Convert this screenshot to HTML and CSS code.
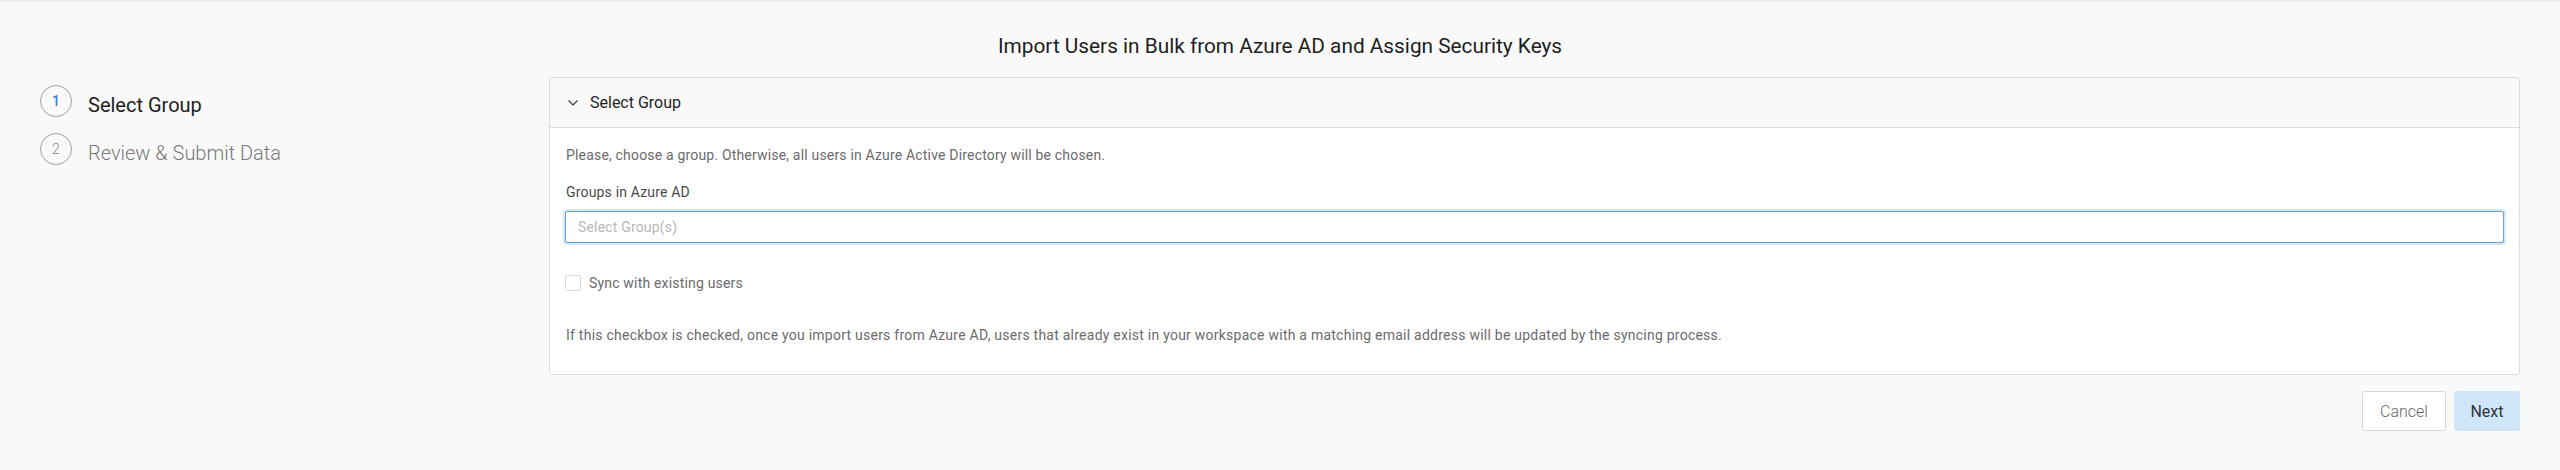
FILE: index.html
```html
<!DOCTYPE html>
<html lang="en">
<head>
<meta charset="utf-8">
<title>Import Users in Bulk from Azure AD</title>
<link rel="stylesheet" href="styles.css">
</head>
<body>
<div class="page">
  <h1 class="title">Import Users in Bulk from Azure AD and Assign Security Keys</h1>
  <div class="content">
    <ol class="steps">
      <li class="step active"><span class="circle">1</span><span class="step-label">Select Group</span></li>
      <li class="step"><span class="circle">2</span><span class="step-label">Review &amp; Submit Data</span></li>
    </ol>
    <div class="main">
      <section class="panel">
        <header class="panel-header">
          <svg class="chevron" width="10" height="6" viewBox="0 0 10 6"><path d="M0.5 0.5 L5 5 L9.5 0.5" fill="none" stroke="#333" stroke-width="1.1"/></svg>
          <span class="panel-title">Select Group</span>
        </header>
        <div class="panel-body">
          <p class="hint">Please, choose a group. Otherwise, all users in Azure Active Directory will be chosen.</p>
          <label class="field-label">Groups in Azure AD</label>
          <div class="select-input"><span class="placeholder">Select Group(s)</span></div>
          <label class="check-row"><span class="checkbox"></span><span class="check-text">Sync with existing users</span></label>
          <p class="hint note">If this checkbox is checked, once you import users from Azure AD, users that already exist in your workspace with a matching email address will be updated by the syncing process.</p>
        </div>
      </section>
      <div class="actions">
        <button class="btn btn-cancel">Cancel</button>
        <button class="btn btn-next">Next</button>
      </div>
    </div>
  </div>
</div>
</body>
</html>
```
FILE: styles.css
```css
html, body {
  margin: 0;
  padding: 0;
  background: #f9f9f9;
}
body {
  font-family: Roboto, "Liberation Sans", sans-serif;
  color: #333;
  height: 470px;
}
.page {
  border-top: 2px solid #ececec;
}
.title {
  margin: 0;
  padding-top: 32px;
  height: 43px;
  line-height: 24px;
  font-size: 20.8px;
  font-weight: 400;
  text-align: center;
  color: #1e1e1e;
}
.content {
  display: flex;
  padding: 0 40px 0 40px;
}
.steps {
  list-style: none;
  margin: 0;
  padding: 0;
  width: 509px;
  flex: none;
}
.step {
  display: flex;
  align-items: center;
  height: 48px;
  gap: 16px;
}
.circle {
  box-sizing: border-box;
  width: 32px;
  height: 32px;
  border: 1px solid #a0a0a0;
  border-radius: 50%;
  display: flex;
  align-items: center;
  justify-content: center;
  font-size: 14px;
  color: #8a8a8a;
  font-weight: 300;
}
.step.active .circle {
  color: #3d7fcc;
  font-weight: 500;
}
.step-label {
  padding-top: 7px;
  font-size: 20px;
  font-weight: 300;
  color: #7a7a7a;
}
.step.active .step-label {
  color: #1e1e1e;
  font-weight: 400;
}
.main {
  flex: 1;
  min-width: 0;
}
.panel {
  border: 1px solid #dcdcdc;
  border-radius: 3px;
  background: #fff;
}
.panel-header {
  display: flex;
  align-items: center;
  height: 49px;
  padding-left: 18px;
  background: #f9f9f9;
  border-bottom: 1px solid #dcdcdc;
  border-radius: 3px 3px 0 0;
}
.chevron {
  margin-top: 1px;
  margin-right: 12px;
}
.panel-title {
  font-size: 16px;
  color: #1e1e1e;
}
.panel-body {
  padding: 17px 15px 29px 16px;
}
.hint {
  margin: 0;
  font-size: 14px;
  letter-spacing: 0.18px;
  line-height: 20px;
  color: #6b6b6b;
  font-weight: 400;
}
.field-label {
  display: block;
  margin-top: 17px;
  font-size: 14px;
  letter-spacing: 0.18px;
  line-height: 20px;
  color: #4a4a4a;
}
.select-input {
  box-sizing: border-box;
  margin-top: 9px;
  margin-left: -1px;
  height: 32px;
  border: 1px solid #64a2dc;
  border-radius: 2px;
  box-shadow: 0 0 0 2px #d8e8f6;
  background: #fff;
  display: flex;
  align-items: center;
  padding-left: 12px;
}
.placeholder {
  font-size: 14px;
  letter-spacing: 0.18px;
  color: #b8b8b8;
}
.check-row {
  display: flex;
  align-items: center;
  gap: 8px;
  margin-top: 30px;
  height: 20px;
}
.checkbox {
  box-sizing: border-box;
  width: 16px;
  height: 16px;
  margin-left: -1px;
  border: 1px solid #dadada;
  border-radius: 2px;
  background: #fff;
}
.check-text {
  font-size: 14px;
  letter-spacing: 0.18px;
  color: #6b6b6b;
}
.note {
  margin-top: 32px;
  letter-spacing: 0.24px;
}
.actions {
  display: flex;
  justify-content: flex-end;
  gap: 8px;
  margin-top: 16px;
}
.btn {
  font-family: Roboto, "Liberation Sans", sans-serif;
  font-size: 16px;
  height: 40px;
  border-radius: 3px;
  cursor: pointer;
}
.btn-cancel {
  width: 84px;
  background: #fff;
  border: 1px solid #d6d6d6;
  color: #666;
  font-weight: 300;
}
.btn-next {
  width: 66px;
  background: #cfe6fb;
  border: none;
  color: #333;
}
```
